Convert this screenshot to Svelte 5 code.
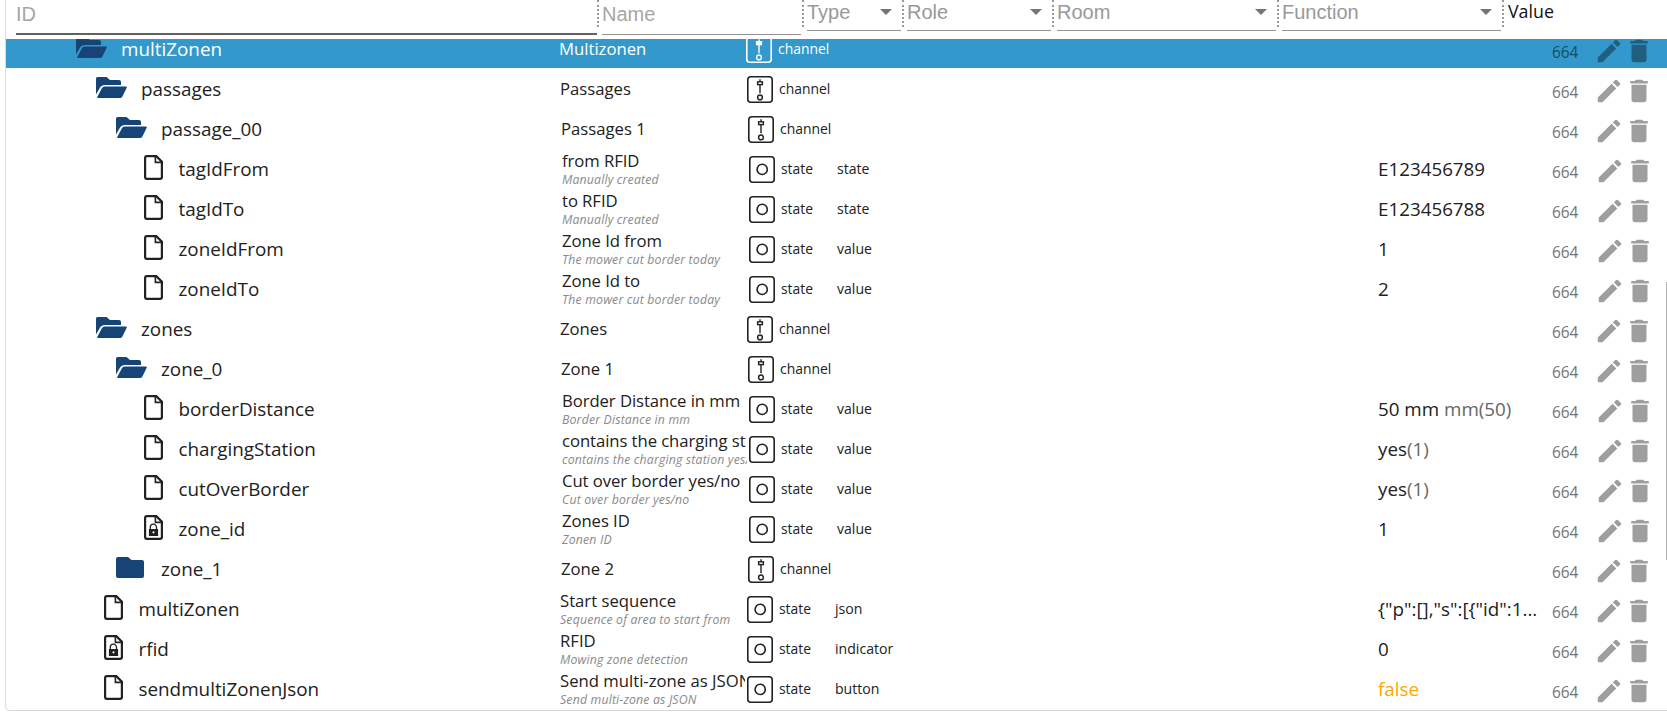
<script>
  const headers = [
    { label: 'ID', cls: 'id', select: false },
    { label: 'Name', cls: 'name', select: false },
    { label: 'Type', cls: 'type', select: true },
    { label: 'Role', cls: 'role', select: true },
    { label: 'Room', cls: 'room', select: true },
    { label: 'Function', cls: 'func', select: true },
  ];

  const rows = [
    { id: 'multiZonen', level: 1, icon: 'open', name: 'Multizonen', type: 'channel', selected: true },
    { id: 'passages', level: 2, icon: 'open', name: 'Passages', type: 'channel' },
    { id: 'passage_00', level: 3, icon: 'open', name: 'Passages 1', type: 'channel' },
    { id: 'tagIdFrom', level: 4, icon: 'file', name: 'from RFID', desc: 'Manually created', type: 'state', role: 'state', value: 'E123456789' },
    { id: 'tagIdTo', level: 4, icon: 'file', name: 'to RFID', desc: 'Manually created', type: 'state', role: 'state', value: 'E123456788' },
    { id: 'zoneIdFrom', level: 4, icon: 'file', name: 'Zone Id from', desc: 'The mower cut border today', type: 'state', role: 'value', value: '1' },
    { id: 'zoneIdTo', level: 4, icon: 'file', name: 'Zone Id to', desc: 'The mower cut border today', type: 'state', role: 'value', value: '2' },
    { id: 'zones', level: 2, icon: 'open', name: 'Zones', type: 'channel' },
    { id: 'zone_0', level: 3, icon: 'open', name: 'Zone 1', type: 'channel' },
    { id: 'borderDistance', level: 4, icon: 'file', name: 'Border Distance in mm', desc: 'Border Distance in mm', type: 'state', role: 'value', value: '50 mm', extra: ' mm(50)' },
    { id: 'chargingStation', level: 4, icon: 'file', name: 'contains the charging st', desc: 'contains the charging station yes/', type: 'state', role: 'value', value: 'yes', extra: '(1)' },
    { id: 'cutOverBorder', level: 4, icon: 'file', name: 'Cut over border yes/no', desc: 'Cut over border yes/no', type: 'state', role: 'value', value: 'yes', extra: '(1)' },
    { id: 'zone_id', level: 4, icon: 'lock', name: 'Zones ID', desc: 'Zonen ID', type: 'state', role: 'value', value: '1' },
    { id: 'zone_1', level: 3, icon: 'closed', name: 'Zone 2', type: 'channel' },
    { id: 'multiZonen', level: 2, icon: 'file', name: 'Start sequence', desc: 'Sequence of area to start from', type: 'state', role: 'json', value: '{"p":[],"s":[{"id":1...' },
    { id: 'rfid', level: 2, icon: 'lock', name: 'RFID', desc: 'Mowing zone detection', type: 'state', role: 'indicator', value: '0' },
    { id: 'sendmultiZonenJson', level: 2, icon: 'file', name: 'Send multi-zone as JSON', desc: 'Send multi-zone as JSON', type: 'state', role: 'button', value: 'false', warn: true },
  ];
</script>

<div class="browser">
  <div class="head">
    {#each headers as h}
      <div class="col {h.cls}" class:select={h.select}>
        <div class="field">
          <span>{h.label}</span>
          {#if h.select}
            <svg class="arrow" viewBox="0 0 12 6"><path d="M0 0h12L6 6z" /></svg>
          {/if}
        </div>
      </div>
    {/each}
    <div class="valuehead">Value</div>
  </div>

  <div class="body">
    <div class="rows">
      {#each rows as r}
        <div class="row l{r.level}" class:selected={r.selected}>
          <div class="idcell" class:leaf={r.icon === 'file' || r.icon === 'lock'}>
            {#if r.icon === 'open'}
              <svg class="folder" viewBox="0 0 31 21">
                <path d="M0 1.5Q0 0 1.5 0H10.5L14 3H23Q25 3 25 5V8H8.5Q5.5 8 4 10.5L0 17.5Z" />
                <path d="M8.6 9.5H30Q31.3 9.5 30.7 10.8L26.4 19.5Q25.6 21 24 21H2Q.8 21 1.4 19.7L6 11Q6.8 9.5 8.6 9.5Z" />
              </svg>
            {:else if r.icon === 'closed'}
              <svg class="folder" viewBox="0 0 31 21">
                <path d="M2 0H12L15.5 3H26Q28 3 28 5V19Q28 21 26 21H2Q0 21 0 19V2Q0 0 2 0Z" />
              </svg>
            {:else}
              <svg class="file" viewBox="0 0 19 25">
                <path class="line" d="M3 1.1H12.3L17.9 6.7V22Q17.9 23.9 16 23.9H3Q1.1 23.9 1.1 22V3Q1.1 1.1 3 1.1Z" />
                <path class="fold" d="M11.4 1.5V7.4H17.6" />
                {#if r.icon === 'lock'}
                  <path class="shackle" d="M6.3 15V12.3a3.1 3.1 0 0 1 6.2 0V15" />
                  <path class="lockbody" fill-rule="evenodd" d="M4.9 14H14.1V21H4.9ZM9.5 16.2a1.1 1.1 0 1 0 .01 0Z" />
                {/if}
              </svg>
            {/if}
            <span>{r.id}</span>
          </div>
          <div class="namecell">
            <div class="title">{r.name}</div>
            {#if r.desc}<div class="desc">{r.desc}</div>{/if}
          </div>
          <div class="typecell">
            <svg class="kind" viewBox="0 0 26 27">
              <rect x=".8" y=".8" width="24.4" height="25.4" rx="3" />
              {#if r.type === 'channel'}
                <g class="slider">
                  <path d="M13 3.2V5.5M13 9V17.3" />
                  <rect class="knob" x="10.6" y="5.8" width="4.8" height="2.8" />
                  <circle cx="13" cy="21.4" r="2.4" />
                </g>
              {:else}
                <circle cx="13.2" cy="13.4" r="5.1" />
              {/if}
            </svg>
            <span>{r.type}</span>
          </div>
          <div class="rolecell">{r.role ?? ''}</div>
          <div class="valuecell" class:warn={r.warn}>{r.value ?? ''}<span class="extra">{r.extra ?? ''}</span></div>
          <div class="acl">664</div>
          <div class="actions">
            <svg viewBox="0 0 24 24"><path d="M3 17.25V21h3.75L17.81 9.94l-3.75-3.75L3 17.25zM20.71 7.04a1 1 0 0 0 0-1.41l-2.34-2.34a1 1 0 0 0-1.41 0l-1.83 1.83 3.75 3.75 1.83-1.83z" /></svg>
            <svg viewBox="0 0 24 24"><path d="M6 19c0 1.1.9 2 2 2h8c1.1 0 2-.9 2-2V7H6v12zM19 4h-3.5l-1-1h-5l-1 1H5v2h14V4z" /></svg>
          </div>
        </div>
      {/each}
    </div>
    <div class="scroll"></div>
  </div>
</div>

<style>
  :global(body) { background: #fff; overflow: hidden; }
  .browser {
    box-sizing: border-box;
    height: 711px;
    margin-left: 5px;
    border-left: 1px solid #dcdcdc;
    border-bottom: 1px solid #d5d5d5;
    border-bottom-left-radius: 5px;
    box-shadow: 0 1px 1px #eee;
    font-family: "Open Sans", "Noto Sans", sans-serif;
    color: #212121;
    white-space: nowrap;
    overflow: hidden;
  }
  .head { display: flex; height: 39px; font-family: "Liberation Sans", Arial, sans-serif; font-size: 20px; color: #999; }
  .col { box-sizing: border-box; flex: none; padding-right: 1px; height: 27px; border-right: 2px dotted #999; }
  .field { display: flex; justify-content: space-between; box-sizing: border-box; height: 35px; line-height: 28px; border-bottom: 1px solid #949494; }
  .id { width: 593px; padding-left: 10px; }
  .id .field { border-bottom: 2px solid #616161; color: #a6a6a6; width: 581px; }
  .name { width: 205px; padding-left: 3px; color: #a6a6a6; }
  .type { width: 100px; }
  .role { width: 150px; }
  .room { width: 225px; }
  .func { width: 225px; }
  .select { padding-left: 3px; }
  .select .field { height: 31px; line-height: 25px; }
  .arrow { width: 12px; height: 6px; margin: 9px 9px 0 0; fill: #757575; }
  .valuehead { font: 17.8px/23px "Open Sans", sans-serif; color: #111; padding-left: 4px; }

  .body { display: flex; height: 671px; overflow: hidden; }
  .rows { flex: 1; margin-top: -11px; }
  .row {
    display: grid;
    grid-template-columns: 553px 187px 89px 543px 174px 42px 1fr;
    height: 40px;
    line-height: 40px;
  }
  .idcell { display: flex; align-items: flex-start; font-size: 18.85px; line-height: 43px; }
  .l1 .idcell { padding-left: 70px; }
  .l2 .idcell { padding-left: 90px; }
  .l3 .idcell { padding-left: 110px; }
  .l4 .idcell { padding-left: 138px; }
  .l2 .leaf { padding-left: 98px; }
  .folder { width: 31px; height: 21px; margin: 9px 14px 0 0; fill: #174477; }
  .file { width: 19px; height: 25px; margin: 7px 15.5px 0 0; fill: none; stroke: #212121; }
  .line { stroke-width: 2.2; }
  .fold { stroke-width: 1.6; }
  .shackle { stroke-width: 1.3; }
  .lockbody { fill: #212121; stroke: none; }
  .namecell { overflow: hidden; font-size: 16.7px; line-height: 42px; margin-right: 2px; }
  .l2 .namecell, .l2 .typecell, .l2 .rolecell { transform: translateX(1px); }
  .l3 .namecell, .l3 .typecell { transform: translateX(2px); }
  .l4 .namecell, .l4 .typecell, .l4 .rolecell { transform: translateX(3px); }
  .title:not(:last-child) { height: 23px; line-height: 26px; }
  .l4 .title { letter-spacing: -0.07px; }
  .desc { font-size: 12.3px; letter-spacing: 0.16px; line-height: 17px; font-style: italic; color: #8a8a8a; }
  .typecell { display: flex; font-size: 13.9px; line-height: 41px; }
  .kind { width: 26px; height: 27px; margin: 8px 6px 0 0; fill: none; stroke: #212121; stroke-width: 1.6; }
  .slider { stroke-width: 1.4; }
  .rolecell { font-size: 14.1px; line-height: 41px; margin-left: -1px; }
  .valuecell { font-size: 18.8px; line-height: 43px; }
  .extra { color: #666; }
  .warn { color: #ffa500; }
  .acl { font-size: 15.4px; line-height: 50px; color: #757575; }
  .actions { display: flex; height: 30px; margin-top: 8px; }
  .actions svg { width: 30px; height: 30px; fill: #9e9e9e; }
  .l4 .actions { transform: translateX(1px); }
  .selected { background: #3399cc; color: #fff; }
  .selected .kind { stroke: #fff; }
  .selected .knob { fill: #fff; }
  .selected .acl { color: #174b66; }
  .selected .actions svg { fill: #205f7e; }
  .scroll { width: 1px; height: 278px; margin-top: 243px; margin-left: -1px; background: #b5b5b5; z-index: 1; }
</style>
